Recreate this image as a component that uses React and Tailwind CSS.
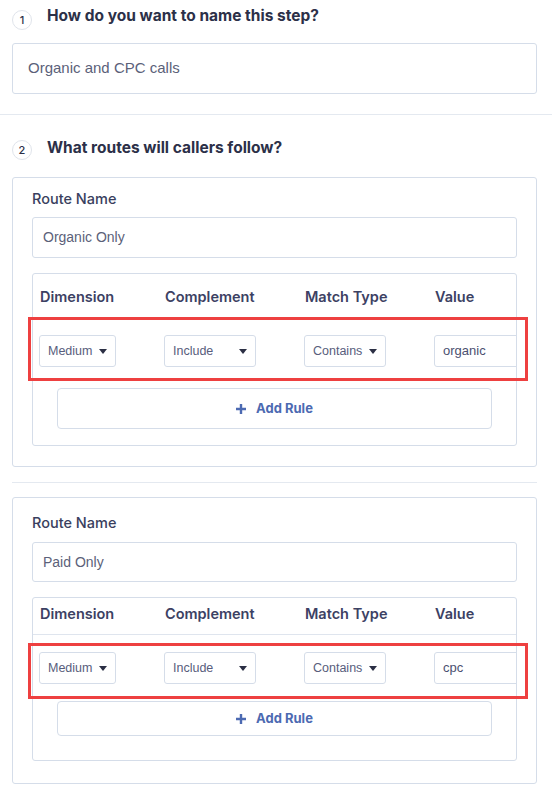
import React from "react";

const SANS = { fontFamily: "Inter, 'Noto Sans', sans-serif" };
const ARIAL = { fontFamily: "'Liberation Sans', Arial, sans-serif" };

function Caret() {
  return (
    <svg width="8" height="5" viewBox="0 0 8 5" className="shrink-0">
      <polygon points="0,0 8,0 4,5" fill="#2b2f44" />
    </svg>
  );
}

function Select({ label, w }) {
  return (
    <div
      className={`flex items-center justify-between h-8 pl-[8px] pr-[8px] border border-[#d5dde9] rounded-[3px] bg-white ${w}`}
    >
      <span className="text-[12.5px] text-[#585d7c] leading-none" style={ARIAL}>
        {label}
      </span>
      <Caret />
    </div>
  );
}

function Step({ n, title, className, circleMt }) {
  return (
    <div className={`flex items-start ${className}`}>
      <div className={`ml-[12px] w-5 h-5 rounded-full border border-[#e0e4eb] flex items-center justify-center text-[11px] font-medium text-[#2c3048] ${circleMt}`} style={SANS}>
        {n}
      </div>
      <div className="ml-[15px] text-[15.5px] leading-5 font-bold text-[#2c3048]" style={SANS}>
        {title}
      </div>
    </div>
  );
}

function Headers() {
  return (
    <div className="flex text-[14.5px] leading-5 font-semibold text-[#3c4163] pl-[7px]" style={SANS}>
      <div className="w-[125px] shrink-0">Dimension</div>
      <div className="w-[140px] shrink-0">Complement</div>
      <div className="w-[130px] shrink-0">Match Type</div>
      <div className="shrink-0">Value</div>
    </div>
  );
}

function RuleRow({ value }) {
  return (
    <div className="flex pl-[6px] overflow-hidden">
      <div className="w-[125px] shrink-0">
        <Select label="Medium" w="w-[77px]" />
      </div>
      <div className="w-[140px] shrink-0">
        <Select label="Include" w="w-[92px]" />
      </div>
      <div className="w-[130px] shrink-0">
        <Select label="Contains" w="w-[82px]" />
      </div>
      <div className="shrink-0 w-[110px] h-8 border border-[#d5dde9] rounded-[3px] flex items-center pl-[8px] text-[13px] text-[#4b5070]" style={ARIAL}>
        {value}
      </div>
    </div>
  );
}

function AddRule({ h }) {
  return (
    <div className={`mx-[24px] ${h} border border-[#d5dde9] rounded-[4px] flex items-center justify-center gap-[10px] text-[13px] font-bold text-[#4c6ab2]`} style={SANS}>
      <svg width="10" height="10" viewBox="0 0 10 10">
        <path d="M5 0V10M0 5H10" stroke="#4c6ab2" strokeWidth="2.4" />
      </svg>
      <span>Add Rule</span>
    </div>
  );
}

function RouteInput({ text, h }) {
  return (
    <div className={`${h} border border-[#d5dde9] rounded-[3px] flex items-center pl-[10px] text-[14px] text-[#5b6179]`} style={ARIAL}>
      {text}
    </div>
  );
}

export default function App() {
  return (
    <div className="w-[552px] h-[789px] bg-white overflow-hidden relative">
      <Step n="1" title="How do you want to name this step?" className="pt-[6px]" circleMt="mt-[4px]" />
      <div className="ml-[12px] mr-[15px] mt-[13px] h-[51px] border border-[#d5dde9] rounded-[3px] flex items-center pl-[15px] text-[15px] text-[#5b6179]" style={ARIAL}>
        Organic and CPC calls
      </div>
      <div className="mt-[20px] h-px bg-[#e4e9f0]" />

      <Step n="2" title="What routes will callers follow?" className="pt-[23px]" circleMt="mt-[2px]" />

      {/* Card 1 */}
      <div className="ml-[12px] mr-[15px] mt-[17px] border border-[#d5dde9] rounded-[3px] px-[19px] pt-[11px] pb-[20px]">
        <div className="text-[14.5px] leading-5 font-medium text-[#3a3f5e]" style={SANS}>Route Name</div>
        <div className="mt-[8px]">
          <RouteInput text="Organic Only" h="h-[41px]" />
        </div>
        <div className="mt-[15px] border border-[#d5dde9] rounded-[3px] relative pt-[13px] pb-[16px]">
          <Headers />
          <div className="mt-[28px]">
            <RuleRow value="organic" />
          </div>
          <div className="mt-[21px]">
            <AddRule h="h-[41px]" />
          </div>
          <div className="absolute left-[-5px] right-[-12px] top-[43px] h-[64px] border-[3px] border-[#ee4040] pointer-events-none" />
        </div>
      </div>

      <div className="ml-[12px] mr-[15px] mt-[15px] h-px bg-[#e4e9f0]" />

      {/* Card 2 */}
      <div className="ml-[12px] mr-[15px] mt-[14px] border border-[#d5dde9] rounded-[3px] px-[19px] pt-[15px] pb-[22px]">
        <div className="text-[14.5px] leading-5 font-medium text-[#3a3f5e]" style={SANS}>Route Name</div>
        <div className="mt-[9px]">
          <RouteInput text="Paid Only" h="h-[40px]" />
        </div>
        <div className="mt-[15px] border border-[#d5dde9] rounded-[3px] relative pb-[24px]">
          <div className="h-[37px] pt-[6px] border-b border-[#dfe5ee]">
            <Headers />
          </div>
          <div className="mt-[17px]">
            <RuleRow value="cpc" />
          </div>
          <div className="mt-[17px]">
            <AddRule h="h-[35px]" />
          </div>
          <div className="absolute left-[-5px] right-[-12px] top-[45px] h-[56px] border-[3px] border-[#ee4040] pointer-events-none" />
        </div>
      </div>
    </div>
  );
}
